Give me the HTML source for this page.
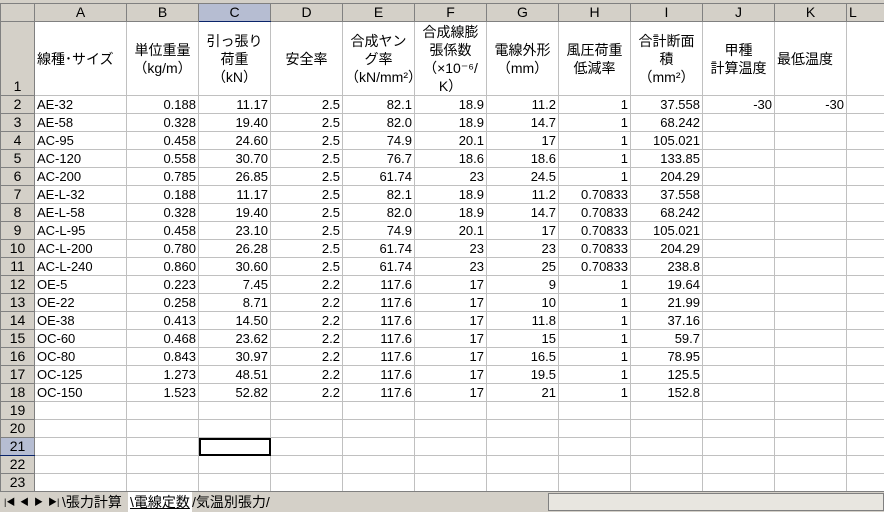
<!DOCTYPE html>
<html><head><meta charset="utf-8"><style>
body{margin:0;width:884px;height:511px;overflow:hidden;background:#fff;font-family:"Liberation Sans","Noto Sans CJK JP",sans-serif;font-size:13px;position:relative}
.top{position:absolute;left:0;top:0;width:884px;height:3px;background:#d4d0c8;border-bottom:1px solid #808080}
table{position:absolute;left:0;top:3px;border-collapse:collapse;table-layout:fixed;width:886px}
td{border:1px solid #c0c0c0;padding:0 2px;white-space:nowrap;overflow:hidden;height:17px;line-height:15px}
tr.h td{background:#d4d0c8;border-color:#808080;text-align:center;height:17px;font-size:14px}
td.rn{background:#d4d0c8;border-color:#808080;text-align:center;padding:0;font-size:14px}
td.r{text-align:right}
tr.one td{height:73px;vertical-align:middle;text-align:center;line-height:18px;font-size:14px}
tr.one td.rn{vertical-align:bottom}
.sel{background:#b6bdd2!important;border-bottom:1px solid #0a246a!important}
.tabs{position:absolute;left:0;top:491px;width:884px;height:20px;background:#d4d0c8;border-top:1px solid #808080;font-size:14px}
</style></head><body>
<div class="top"></div>
<table>
<colgroup><col style="width:34px"><col style="width:92px"><col style="width:72px"><col style="width:72px"><col style="width:72px"><col style="width:72px"><col style="width:72px"><col style="width:72px"><col style="width:72px"><col style="width:72px"><col style="width:72px"><col style="width:72px"><col style="width:40px"></colgroup>
<tr class="h"><td></td><td>A</td><td>B</td><td class="sel">C</td><td>D</td><td>E</td><td>F</td><td>G</td><td>H</td><td>I</td><td>J</td><td>K</td><td style="text-align:left">L</td></tr>
<tr class="one"><td class="rn">1</td><td style="text-align:left">線種･サイズ</td><td>単位重量<br>（kg/m）</td><td>引っ張り<br>荷重<br>（kN）</td><td>安全率</td><td>合成ヤン<br>グ率<br>（kN/mm²）</td><td>合成線膨<br>張係数<br>（×10⁻⁶/<br>K）</td><td>電線外形<br>（mm）</td><td>風圧荷重<br>低減率</td><td>合計断面<br>積<br>（mm²）</td><td>甲種<br>計算温度</td><td style="text-align:left">最低温度</td><td></td></tr>
<tr><td class="rn">2</td><td>AE-32</td><td class="r">0.188</td><td class="r">11.17</td><td class="r">2.5</td><td class="r">82.1</td><td class="r">18.9</td><td class="r">11.2</td><td class="r">1</td><td class="r">37.558</td><td class="r">-30</td><td class="r">-30</td><td></td></tr>
<tr><td class="rn">3</td><td>AE-58</td><td class="r">0.328</td><td class="r">19.40</td><td class="r">2.5</td><td class="r">82.0</td><td class="r">18.9</td><td class="r">14.7</td><td class="r">1</td><td class="r">68.242</td><td></td><td></td><td></td></tr>
<tr><td class="rn">4</td><td>AC-95</td><td class="r">0.458</td><td class="r">24.60</td><td class="r">2.5</td><td class="r">74.9</td><td class="r">20.1</td><td class="r">17</td><td class="r">1</td><td class="r">105.021</td><td></td><td></td><td></td></tr>
<tr><td class="rn">5</td><td>AC-120</td><td class="r">0.558</td><td class="r">30.70</td><td class="r">2.5</td><td class="r">76.7</td><td class="r">18.6</td><td class="r">18.6</td><td class="r">1</td><td class="r">133.85</td><td></td><td></td><td></td></tr>
<tr><td class="rn">6</td><td>AC-200</td><td class="r">0.785</td><td class="r">26.85</td><td class="r">2.5</td><td class="r">61.74</td><td class="r">23</td><td class="r">24.5</td><td class="r">1</td><td class="r">204.29</td><td></td><td></td><td></td></tr>
<tr><td class="rn">7</td><td>AE-L-32</td><td class="r">0.188</td><td class="r">11.17</td><td class="r">2.5</td><td class="r">82.1</td><td class="r">18.9</td><td class="r">11.2</td><td class="r">0.70833</td><td class="r">37.558</td><td></td><td></td><td></td></tr>
<tr><td class="rn">8</td><td>AE-L-58</td><td class="r">0.328</td><td class="r">19.40</td><td class="r">2.5</td><td class="r">82.0</td><td class="r">18.9</td><td class="r">14.7</td><td class="r">0.70833</td><td class="r">68.242</td><td></td><td></td><td></td></tr>
<tr><td class="rn">9</td><td>AC-L-95</td><td class="r">0.458</td><td class="r">23.10</td><td class="r">2.5</td><td class="r">74.9</td><td class="r">20.1</td><td class="r">17</td><td class="r">0.70833</td><td class="r">105.021</td><td></td><td></td><td></td></tr>
<tr><td class="rn">10</td><td>AC-L-200</td><td class="r">0.780</td><td class="r">26.28</td><td class="r">2.5</td><td class="r">61.74</td><td class="r">23</td><td class="r">23</td><td class="r">0.70833</td><td class="r">204.29</td><td></td><td></td><td></td></tr>
<tr><td class="rn">11</td><td>AC-L-240</td><td class="r">0.860</td><td class="r">30.60</td><td class="r">2.5</td><td class="r">61.74</td><td class="r">23</td><td class="r">25</td><td class="r">0.70833</td><td class="r">238.8</td><td></td><td></td><td></td></tr>
<tr><td class="rn">12</td><td>OE-5</td><td class="r">0.223</td><td class="r">7.45</td><td class="r">2.2</td><td class="r">117.6</td><td class="r">17</td><td class="r">9</td><td class="r">1</td><td class="r">19.64</td><td></td><td></td><td></td></tr>
<tr><td class="rn">13</td><td>OE-22</td><td class="r">0.258</td><td class="r">8.71</td><td class="r">2.2</td><td class="r">117.6</td><td class="r">17</td><td class="r">10</td><td class="r">1</td><td class="r">21.99</td><td></td><td></td><td></td></tr>
<tr><td class="rn">14</td><td>OE-38</td><td class="r">0.413</td><td class="r">14.50</td><td class="r">2.2</td><td class="r">117.6</td><td class="r">17</td><td class="r">11.8</td><td class="r">1</td><td class="r">37.16</td><td></td><td></td><td></td></tr>
<tr><td class="rn">15</td><td>OC-60</td><td class="r">0.468</td><td class="r">23.62</td><td class="r">2.2</td><td class="r">117.6</td><td class="r">17</td><td class="r">15</td><td class="r">1</td><td class="r">59.7</td><td></td><td></td><td></td></tr>
<tr><td class="rn">16</td><td>OC-80</td><td class="r">0.843</td><td class="r">30.97</td><td class="r">2.2</td><td class="r">117.6</td><td class="r">17</td><td class="r">16.5</td><td class="r">1</td><td class="r">78.95</td><td></td><td></td><td></td></tr>
<tr><td class="rn">17</td><td>OC-125</td><td class="r">1.273</td><td class="r">48.51</td><td class="r">2.2</td><td class="r">117.6</td><td class="r">17</td><td class="r">19.5</td><td class="r">1</td><td class="r">125.5</td><td></td><td></td><td></td></tr>
<tr><td class="rn">18</td><td>OC-150</td><td class="r">1.523</td><td class="r">52.82</td><td class="r">2.2</td><td class="r">117.6</td><td class="r">17</td><td class="r">21</td><td class="r">1</td><td class="r">152.8</td><td></td><td></td><td></td></tr>
<tr><td class="rn">19</td><td></td><td></td><td></td><td></td><td></td><td></td><td></td><td></td><td></td><td></td><td></td><td></td></tr>
<tr><td class="rn">20</td><td></td><td></td><td></td><td></td><td></td><td></td><td></td><td></td><td></td><td></td><td></td><td></td></tr>
<tr><td class="rn sel">21</td><td></td><td></td><td style="outline:2px solid #000;outline-offset:-2px"></td><td></td><td></td><td></td><td></td><td></td><td></td><td></td><td></td><td></td></tr>
<tr><td class="rn">22</td><td></td><td></td><td></td><td></td><td></td><td></td><td></td><td></td><td></td><td></td><td></td><td></td></tr>
<tr><td class="rn">23</td><td></td><td></td><td></td><td></td><td></td><td></td><td></td><td></td><td></td><td></td><td></td><td></td></tr>
</table>
<div class="tabs">
<span style="position:absolute;left:4px;top:3px;font-size:9px">|◀</span>
<span style="position:absolute;left:20px;top:3px;font-size:9px">◀</span>
<span style="position:absolute;left:34px;top:3px;font-size:9px">▶</span>
<span style="position:absolute;left:48px;top:3px;font-size:9px">▶|</span>
<span style="position:absolute;left:62px;top:0px">\張力計算</span>
<span style="position:absolute;left:128px;top:0px;background:#fff;text-decoration:underline;padding:0 2px">\電線定数</span>
<span style="position:absolute;left:192px;top:0px">/気温別張力/</span>
<div style="position:absolute;left:548px;top:1px;width:334px;height:16px;border:1px solid #808080;background:#e8e6e0"></div>
</div>
</body></html>
